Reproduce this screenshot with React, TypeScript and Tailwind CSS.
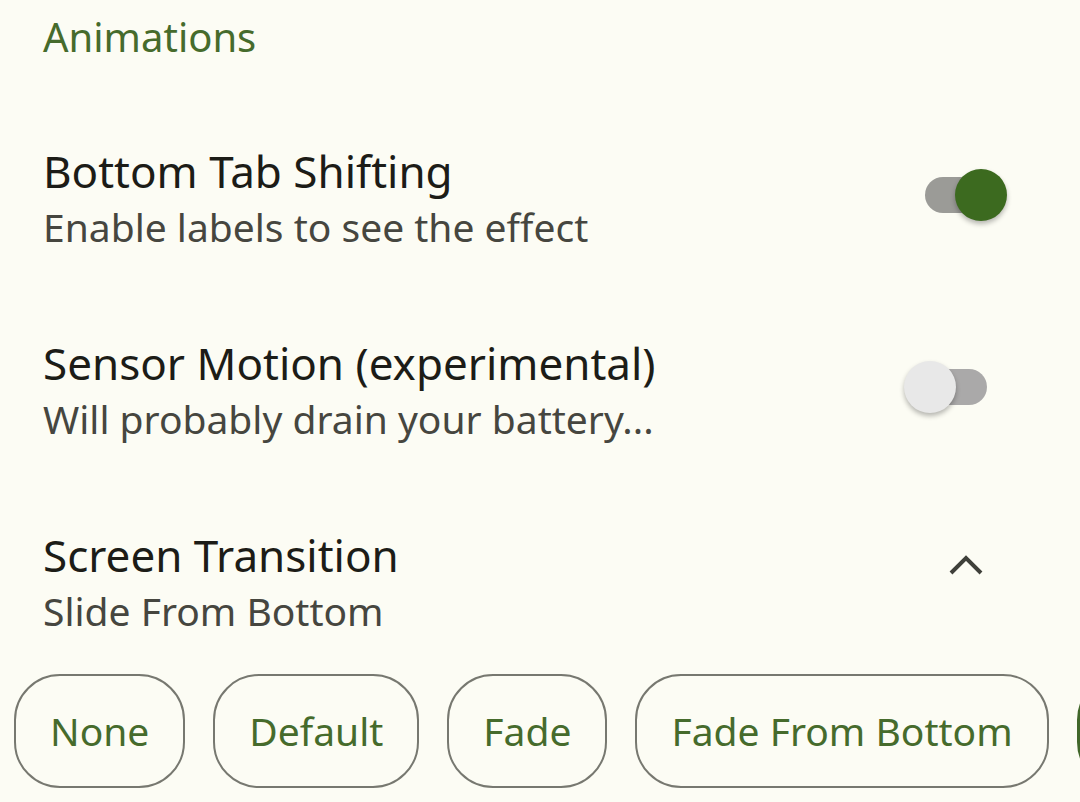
import React, { useState } from 'react';

const TRANSITIONS = ['None', 'Default', 'Fade', 'Fade From Bottom', 'Slide From Bottom'];

function Toggle({ on, onChange }: { on: boolean; onChange: () => void }) {
  return (
    <button type="button" onClick={onChange} className="relative w-[103px] h-[52px] shrink-0">
      <span
        className={`absolute left-[21px] top-[8px] w-[62px] h-[36px] rounded-full ${on ? 'bg-[#9b9b97]' : 'bg-[#aaa9a9]'}`}
      />
      <span
        className={`absolute top-0 w-[52px] h-[52px] rounded-full shadow-[0_3px_5px_rgba(0,0,0,0.28)] ${
          on ? 'left-[51px] bg-[#3c6a1f]' : 'left-0 bg-[#e8e8e8]'
        }`}
      />
    </button>
  );
}

function Row({ title, subtitle, children }: { title: string; subtitle: string; children: React.ReactNode }) {
  return (
    <div className="flex items-start justify-between pr-[73px]">
      <div className="flex flex-col">
        <span className="text-[44px] leading-[56px] text-[#1c1c17]">{title}</span>
        <span className="text-[39px] leading-[56px] text-[#46463f]">{subtitle}</span>
      </div>
      {children}
    </div>
  );
}

export default function App() {
  const [shifting, setShifting] = useState(true);
  const [sensor, setSensor] = useState(false);
  const [transition, setTransition] = useState('Slide From Bottom');

  return (
    <div
      className="w-[1080px] h-[802px] overflow-hidden bg-[#fcfcf4]"
      style={{ fontFamily: '"Noto Sans", Roboto, sans-serif' }}
    >
      <div className="pl-[43px] pt-[13px]">
        <div className="text-[40px] leading-[48px] text-[#466b2c]">Animations</div>
      </div>

      <div className="pl-[43px] mt-[82px] flex flex-col gap-[80px]">
        <Row title="Bottom Tab Shifting" subtitle="Enable labels to see the effect">
          <div className="mt-[26px]">
            <Toggle on={shifting} onChange={() => setShifting(!shifting)} />
          </div>
        </Row>
        <Row title="Sensor Motion (experimental)" subtitle="Will probably drain your battery...">
          <div className="mt-[26px]">
            <Toggle on={sensor} onChange={() => setSensor(!sensor)} />
          </div>
        </Row>
        <Row title="Screen Transition" subtitle={transition}>
          <svg width="36" height="36" viewBox="0 0 36 36" className="mt-[20px] mr-[23px]">
            <path d="M3 26 L18 11 L33 26" fill="none" stroke="#3f403a" strokeWidth="4" />
          </svg>
        </Row>
      </div>

      <div className="mt-[35px] pl-[14px] flex gap-[28px] whitespace-nowrap">
        {TRANSITIONS.map((t) => (
          <button
            key={t}
            type="button"
            onClick={() => setTransition(t)}
            className={`h-[114px] shrink-0 px-[34px] rounded-[46px] border-2 text-[39px] ${
              transition === t
                ? 'bg-[#41672a] border-[#41672a] text-white'
                : 'border-[#777870] text-[#466b2c]'
            }`}
          >
            {t}
          </button>
        ))}
      </div>
    </div>
  );
}
